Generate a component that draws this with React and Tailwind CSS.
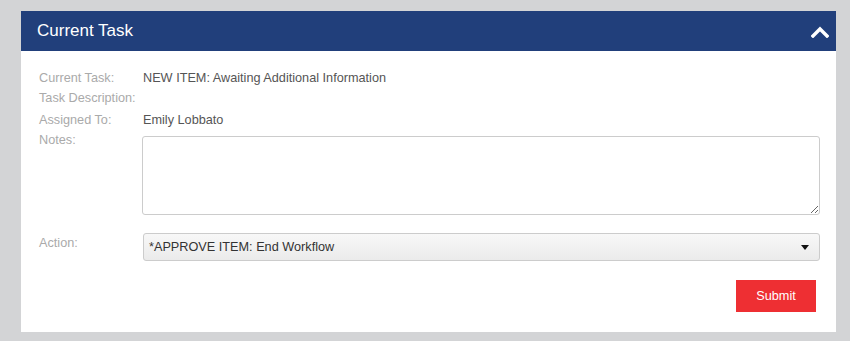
import React from 'react';

const Row = ({ label, children, className = '' }) => (
  <div className={`flex ${className}`}>
    <div className="w-[104px] shrink-0 text-[#aaaaaa]">{label}</div>
    <div className="flex-1 text-[#555555]">{children}</div>
  </div>
);

const App = () => {
  return (
    <div className="w-[850px] h-[341px] bg-[#d3d4d6] pt-[11px] pl-[21px] font-['Liberation_Sans',Arial,sans-serif]">
      <div className="w-[815px] h-[321px] bg-white">
        <div className="h-[40px] bg-[#213f7b] flex items-center justify-between pl-[16px] pr-[7px]">
          <span className="text-white text-[17px]">Current Task</span>
          <svg width="18" height="12" viewBox="0 0 18 12" className="mt-[1px]">
            <path d="M2 10 L9 3 L16 10" fill="none" stroke="white" strokeWidth="3.4" strokeLinecap="square" />
          </svg>
        </div>
        <div className="pl-[18px] pr-[16px] pt-[17px] text-[12.7px] leading-[21px]">
          <Row label="Current Task:">NEW ITEM: Awaiting Additional Information</Row>
          <Row label="Task Description:" className="-mt-[1px]"> </Row>
          <Row label="Assigned To:" className="mt-[1px]">Emily Lobbato</Row>
          <div className="flex -mt-[1px]">
            <div className="w-[103px] shrink-0 text-[#aaaaaa] leading-[18px] pt-[1px]">Notes:</div>
            <textarea className="mt-[6px] flex-1 h-[79px] border border-[#cccccc] rounded-[3px] resize-y outline-none" />
          </div>
          <div className="flex mt-[18px]">
            <div className="w-[104px] shrink-0 text-[#aaaaaa] leading-[18px] pt-[1px]">Action:</div>
            <div className="flex-1 h-[28px] border border-[#cccccc] rounded-[3px] bg-gradient-to-b from-[#f8f8f8] to-[#ebebeb] flex items-center justify-between pl-[5px] pr-[10px] text-[#333333]">
              <span>*APPROVE ITEM: End Workflow</span>
              <svg width="8" height="5" viewBox="0 0 8 5">
                <path d="M0 0 L8 0 L4 5 Z" fill="#111" />
              </svg>
            </div>
          </div>
          <div className="flex justify-end mt-[19px] pr-[4px]">
            <button className="w-[80px] h-[32px] bg-[#ee2f33] text-white text-[12.7px]">Submit</button>
          </div>
        </div>
      </div>
    </div>
  );
};

export default App;
